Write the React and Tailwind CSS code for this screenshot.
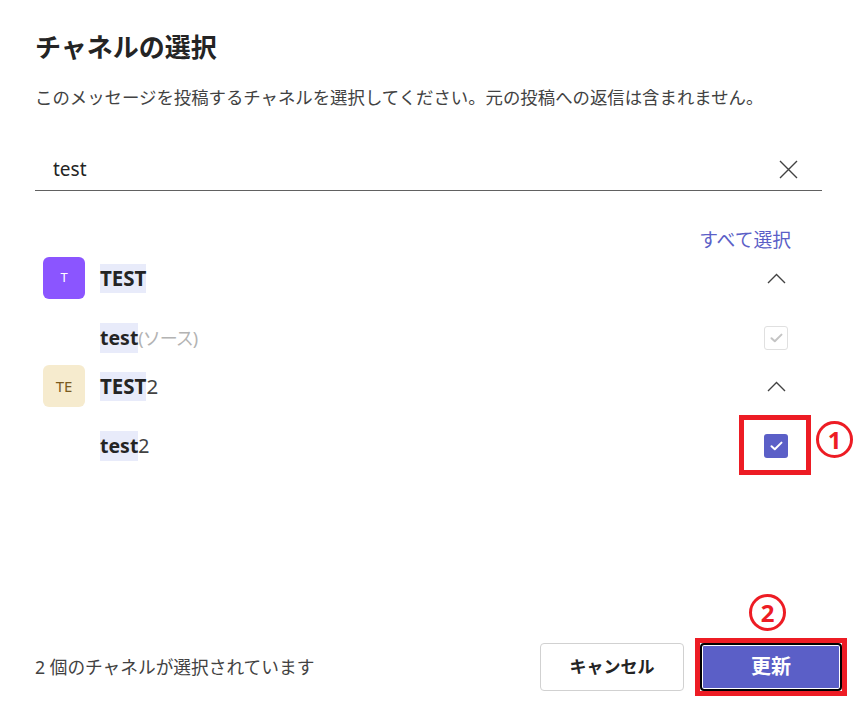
import { useState } from 'react';

function ChevronUp() {
  return (
    <svg width="19" height="11" viewBox="0 0 19 11" fill="none">
      <path d="M1 10L9.5 1.5L18 10" stroke="#424242" strokeWidth="1.4" />
    </svg>
  );
}

function Check({ color }) {
  return (
    <svg width="13" height="10" viewBox="0 0 13 10" fill="none">
      <path d="M1.5 5.2L4.8 8.3L11.5 1.6" stroke={color} strokeWidth="2" strokeLinecap="round" strokeLinejoin="round" />
    </svg>
  );
}

function Marker({ n }) {
  return (
    <div className="w-[37px] h-[37px] rounded-full border-[3px] border-[#ed1c24] flex items-center justify-center text-[#ed1c24] text-[24px] font-bold leading-none">
      {n}
    </div>
  );
}

export default function App() {
  const [query, setQuery] = useState('test');

  return (
    <div className="w-[867px] h-[717px] bg-white flex flex-col pl-[35px] text-[#242424] font-['Noto_Sans','Noto_Sans_CJK_JP',sans-serif]">
      <div className="pr-[45px]">
        <h1 className="pt-[29px] text-[26px] font-bold leading-[36px]">チャネルの選択</h1>
        <p className="mt-[20px] text-[17.4px] leading-[24px] text-[#424242] whitespace-nowrap">
          このメッセージを投稿するチャネルを選択してください。元の投稿への返信は含まれません。
        </p>

        {/* search */}
        <div className="mt-[40px] h-[42px] border-b border-[#616161] flex items-center pl-[18px] pr-[24px]">
          <input
            value={query}
            onChange={(e) => setQuery(e.target.value)}
            className="flex-1 outline-none text-[19px] text-[#242424] bg-transparent"
          />
          <svg width="19" height="19" viewBox="0 0 19 19" fill="none">
            <path d="M1 1L18 18M18 1L1 18" stroke="#424242" strokeWidth="1.4" />
          </svg>
        </div>

        <div className="mt-[37px] flex justify-end pr-[31px] text-[18.8px] leading-[24px] text-[#5b5fc7]">
          すべて選択
        </div>

        {/* team TEST */}
        <div className="mt-[5px] h-[42px] flex items-center pl-[8px] pr-[26px]">
          <div className="w-[42px] h-[42px] rounded-[6px] bg-[#8b55ff] flex items-center justify-center text-white text-[13px]">
            T
          </div>
          <span className="ml-[15px] bg-[#e8ebfa] leading-[29px] text-[20.5px] font-bold">TEST</span>
          <div className="flex-1" />
          <div className="w-[40px] flex justify-center">
            <ChevronUp />
          </div>
        </div>

        <div className="mt-[18px] h-[42px] flex items-center pl-[65px] pr-[26px]">
          <span className="bg-[#e8ebfa] leading-[30px] text-[19.5px] font-bold">test</span>
          <span className="text-[18px] text-[#b3b3b3] tracking-[-1px]">(ソース)</span>
          <div className="flex-1" />
          <div className="w-[40px] flex justify-center">
            <div className="w-[24px] h-[24px] rounded-[3px] border border-[#e0e0e0] bg-white flex items-center justify-center">
              <Check color="#c4c4c4" />
            </div>
          </div>
        </div>

        {/* team TEST2 */}
        <div className="mt-[6px] h-[42px] flex items-center pl-[8px] pr-[26px]">
          <div className="w-[42px] h-[42px] rounded-[6px] bg-[#f6ebce] flex items-center justify-center text-[#7a5a1e] text-[15px]">
            TE
          </div>
          <span className="ml-[15px] text-[20.5px]">
            <span className="bg-[#e8ebfa] leading-[29px] font-bold inline-block">TEST</span>
            <span className="text-[#424242]">2</span>
          </span>
          <div className="flex-1" />
          <div className="w-[40px] flex justify-center">
            <ChevronUp />
          </div>
        </div>

        <div className="mt-[18px] h-[42px] flex items-center pl-[65px] pr-[26px]">
          <span className="text-[19.5px]">
            <span className="bg-[#e8ebfa] leading-[30px] font-bold inline-block">test</span>
            <span className="text-[#424242]">2</span>
          </span>
          <div className="flex-1" />
          <div className="w-[40px] flex justify-center">
            <div className="relative w-[24px] h-[24px] rounded-[3px] bg-[#5b5fc7] flex items-center justify-center">
              <Check color="#ffffff" />
              <span className="absolute left-[-25px] right-[-23px] top-[-19px] bottom-[-17px] border-[5px] border-[#ed1c24]" />
              <div className="absolute left-[52px] top-[-13px]">
                <Marker n="1" />
              </div>
            </div>
          </div>
        </div>
      </div>

      <div className="flex-1" />

      {/* footer */}
      <div className="mb-[26px] h-[48px] flex items-center pr-[25px]">
        <span className="text-[17.7px] text-[#424242]">2 個のチャネルが選択されています</span>
        <div className="flex-1" />
        <button className="w-[144px] h-[48px] rounded-[4px] border border-[#d1d1d1] bg-white text-[17px] font-bold text-[#242424]">
          キャンセル
        </button>
        <div className="relative ml-[16px]">
          <button className="w-[142px] h-[48px] rounded-[4px] border-2 border-black bg-[#5b5fc7] shadow-[inset_0_0_0_1px_white] text-white text-[20px] font-bold">
            更新
          </button>
          <span className="absolute -inset-[5px] border-[5px] border-[#ed1c24]" />
          <div className="absolute left-[49px] top-[-49px]">
            <Marker n="2" />
          </div>
        </div>
      </div>
    </div>
  );
}
